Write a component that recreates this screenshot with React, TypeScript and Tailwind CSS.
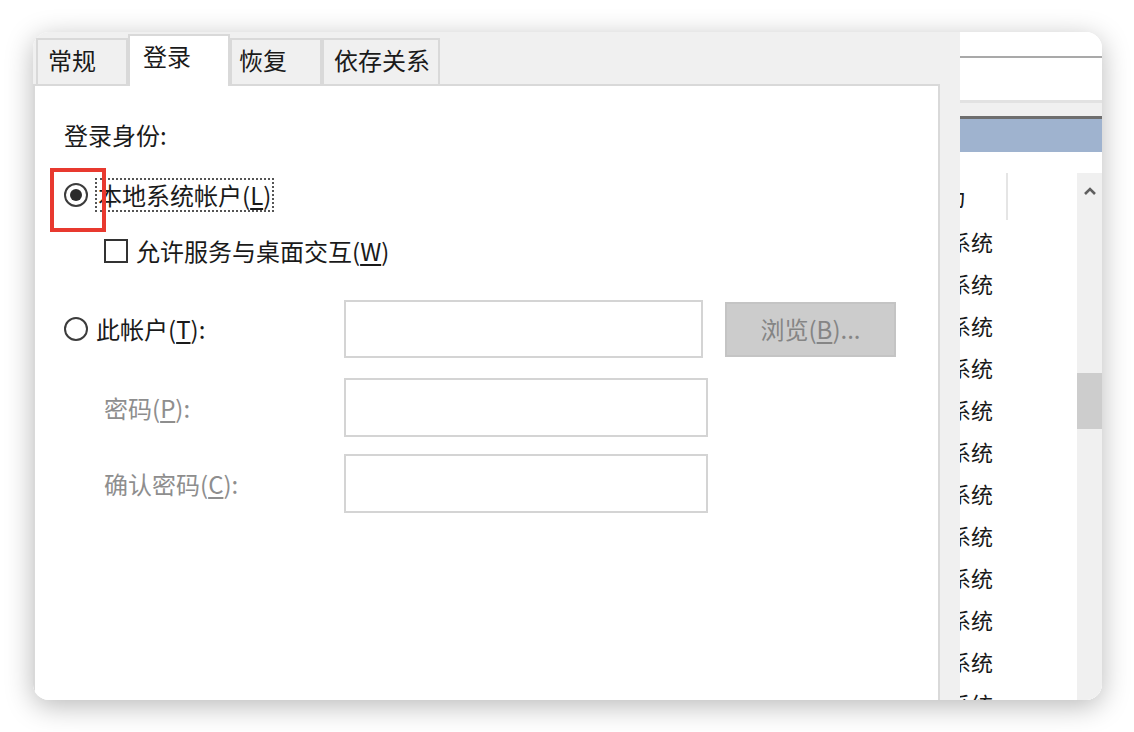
import React from "react";

const ROWS = Array.from({ length: 12 }, (_, i) => i);

function Radio({ checked }: { checked?: boolean }) {
  return (
    <span className="flex h-[24px] w-[24px] shrink-0 items-center justify-center rounded-full border-2 border-[#3c3c3c] bg-white">
      {checked && <span className="h-[12px] w-[12px] rounded-full bg-[#2b2b2b]" />}
    </span>
  );
}

function Key({ k }: { k: string }) {
  return (
    <>
      (<span className="underline underline-offset-[3px]">{k}</span>)
    </>
  );
}

function Tab({ label, active, width, pl }: { label: string; active?: boolean; width: string; pl: string }) {
  return (
    <div
      className={
        active
          ? `relative z-10 -mb-[2px] flex h-[52px] items-start border-x-2 border-t-2 border-[#d9d9d9] bg-white pt-[5px] ${width} ${pl}`
          : `flex h-[46px] items-start border-x-2 border-t-2 border-[#d9d9d9] bg-[#f0f0f0] pt-[5px] ${width} ${pl}`
      }
    >
      <span className="leading-[30px]">{label}</span>
    </div>
  );
}

function Dialog() {
  return (
    <div className="flex w-[927px] shrink-0 flex-col bg-[#f0f0f0]">
      <div className="flex h-[52px] shrink-0 items-end pl-[3px]">
        <Tab label="常规" width="w-[92px]" pl="pl-[10px]" />
        <Tab label="登录" active width="w-[102px]" pl="pl-[13px]" />
        <Tab label="恢复" width="w-[92px]" pl="pl-[7px]" />
        <Tab label="依存关系" width="w-[118px]" pl="pl-[10px]" />
      </div>
      <div className="flex w-[907px] flex-1 flex-col border-x-2 border-t-2 border-[#d9d9d9] bg-white pl-[29px] pt-[33px]">
        <div className="h-[32px] leading-[32px]">登录身份:</div>

        <div className="mt-[26px] flex h-[36px] items-center">
          <span className="relative flex">
            <Radio checked />
            <span className="absolute left-[-14px] top-[-15px] h-[64px] w-[56px] border-4 border-[#e8392f]" />
          </span>
          <span className="ml-[7px] border-2 border-dotted border-[#555] px-[1px] leading-[30px]">
            本地系统帐户<Key k="L" />
          </span>
        </div>

        <div className="mt-[22px] flex h-[32px] items-center pl-[40px]">
          <span className="h-[24px] w-[24px] border-2 border-[#333] bg-white" />
          <span className="ml-[8px] leading-[32px]">
            允许服务与桌面交互<Key k="W" />
          </span>
        </div>

        <div className="mt-[33px] flex h-[58px] items-center">
          <div className="flex w-[280px] shrink-0 items-center">
            <Radio />
            <span className="ml-[8px]">
              此帐户<Key k="T" />:
            </span>
          </div>
          <div className="h-[58px] w-[359px] border-2 border-[#d4d4d4] bg-white" />
          <div className="ml-[22px] flex h-[55px] w-[171px] items-center justify-center border-2 border-[#c4c4c4] bg-[#cccccc] text-[#858585]">
            浏览<Key k="B" />...
          </div>
        </div>

        <div className="mt-[20px] flex h-[59px] items-center">
          <div className="w-[280px] shrink-0 pl-[40px] text-[#8e8e8e]">
            密码<Key k="P" />:
          </div>
          <div className="h-[59px] w-[364px] border-2 border-[#d4d4d4] bg-white" />
        </div>

        <div className="mt-[17px] flex h-[59px] items-center">
          <div className="w-[280px] shrink-0 pl-[40px] text-[#8e8e8e]">
            确认密码<Key k="C" />:
          </div>
          <div className="h-[59px] w-[364px] border-2 border-[#d4d4d4] bg-white" />
        </div>
      </div>
    </div>
  );
}

function ServiceList() {
  return (
    <div className="flex min-w-0 flex-1 flex-col overflow-hidden bg-white">
      <div className="h-[24px] shrink-0" />
      <div className="h-[2px] shrink-0 bg-[#a9a9a9]" />
      <div className="h-[42px] shrink-0" />
      <div className="h-[3px] shrink-0 bg-[#e2e2e2]" />
      <div className="h-[13px] shrink-0 bg-[#f0f0f0]" />
      <div className="h-[3px] shrink-0 bg-[#6e6e6e]" />
      <div className="h-[33px] shrink-0 bg-[#9fb3cf]" />
      <div className="h-[21px] shrink-0" />
      <div className="flex min-h-0 flex-1">
        <div className="flex w-[117px] flex-col overflow-hidden text-[22px]">
          <div className="flex h-[47px] shrink-0 items-center">
            <span className="ml-[-60px] w-[66px] shrink-0 whitespace-nowrap">登录为</span>
            <span className="ml-[40px] h-[47px] w-[2px] bg-[#e5e5e5]" />
          </div>
          {ROWS.map((i) => (
            <div key={i} className="flex h-[42px] shrink-0 items-center">
              <span className="ml-[-55px] shrink-0 whitespace-nowrap">本地系统</span>
            </div>
          ))}
        </div>
        <div className="flex w-[25px] flex-col items-center bg-[#f0f0f0]">
          <svg className="mt-[13px] shrink-0" width="14" height="10" viewBox="0 0 14 10">
            <path d="M2 8 L7 3 L12 8" fill="none" stroke="#606060" strokeWidth="2.6" />
          </svg>
          <div className="mt-[177px] h-[56px] w-full shrink-0 bg-[#cdcdcd]" />
        </div>
      </div>
    </div>
  );
}

export default function App() {
  return (
    <div className="h-[732px] w-[1134px] bg-white pl-[33px] pt-[32px] font-['Noto_Sans_CJK_SC','Microsoft_YaHei',sans-serif] text-[24px] text-[#1a1a1a]">
      <div className="flex h-[668px] w-[1069px] overflow-hidden rounded-[16px] bg-white shadow-[0_6px_28px_rgba(0,0,0,0.28)]">
        <Dialog />
        <ServiceList />
      </div>
    </div>
  );
}
